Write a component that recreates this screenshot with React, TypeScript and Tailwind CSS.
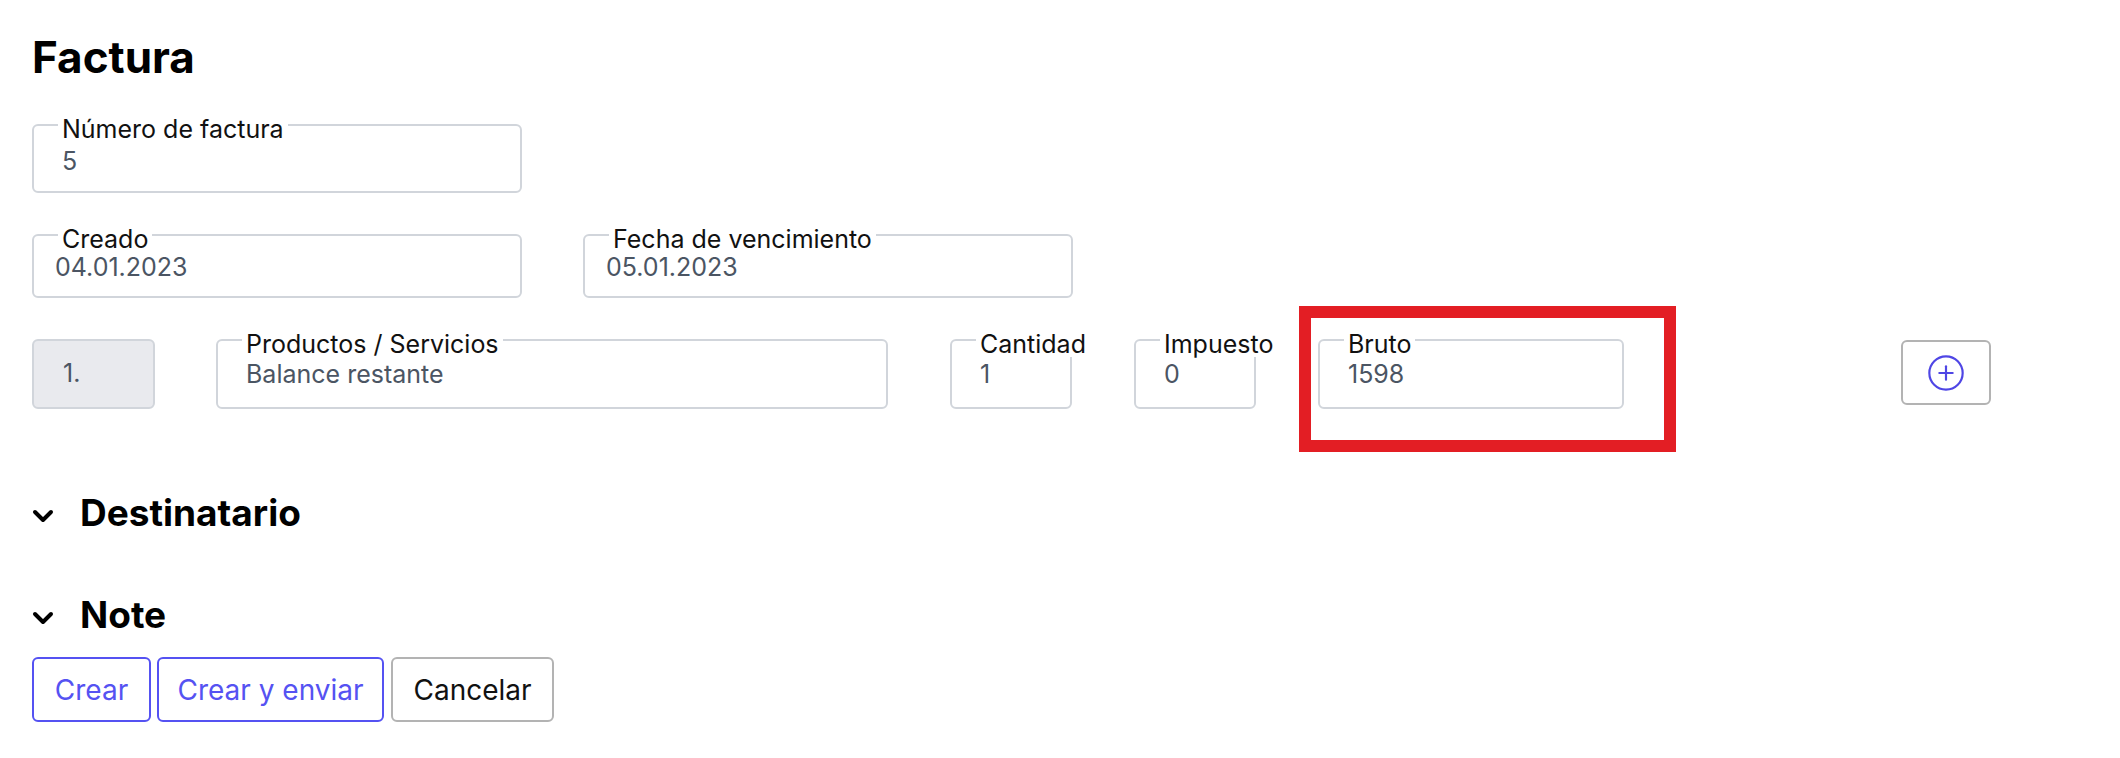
import React from 'react';
import { ChevronDown, CirclePlus } from 'lucide-react';

type FieldProps = {
  label: string;
  value: string;
  width: string;
  valueClass?: string;
  padClass?: string;
};

const Field = ({ label, value, width, valueClass = 'mt-[4px] pl-1', padClass = 'pb-[15px]' }: FieldProps) => (
  <fieldset className={`${width} ${padClass} min-w-0 border-2 border-[#d1d5db] rounded-md px-6 m-0`}>
    <legend className="px-1 pt-[9px] text-[25px] leading-none text-[#111] whitespace-nowrap">{label}</legend>
    <div className={`${valueClass} text-[25px] leading-[30px] text-[#4b5563] whitespace-nowrap`}>{value}</div>
  </fieldset>
);

const Section = ({ title, className }: { title: string; className: string }) => (
  <div className={`flex items-center ${className}`}>
    <ChevronDown className="w-[32px] h-[32px] mt-[7px] -ml-[5px] text-black" strokeWidth={3} />
    <h2 className="ml-[21px] text-[37px] leading-none font-bold text-black">{title}</h2>
  </div>
);

const App = () => {
  return (
    <div className="w-[2120px] h-[758px] bg-white pl-[32px] pt-[35px] font-['Inter',sans-serif]">
      <h1 className="text-[44px] leading-none font-bold text-black">Factura</h1>

      <div className="mt-[29px]">
        <Field label="Número de factura" value="5" width="w-[490px]" />
      </div>

      <div className="mt-[25px] flex gap-[61px]">
        <Field label="Creado" value="04.01.2023" width="w-[490px]" valueClass="-ml-[3px]" padClass="pb-[14px]" />
        <Field label="Fecha de vencimiento" value="05.01.2023" width="w-[490px]" valueClass="-ml-[3px]" padClass="pb-[14px]" />
      </div>

      <div className="mt-[25px] flex items-end">
        <div className="w-[123px] h-[70px] bg-[#e9eaee] border-2 border-[#d1d5db] rounded-md flex items-center pl-[29px] text-[25px] text-[#4b5563]">
          1.
        </div>
        <div className="ml-[61px]">
          <Field label="Productos / Servicios" value="Balance restante" width="w-[672px]" valueClass="mt-[2px] pl-1" padClass="pb-[18px]" />
        </div>
        <div className="ml-[62px]">
          <Field label="Cantidad" value="1" width="w-[122px]" valueClass="mt-[2px] pl-1" padClass="pb-[18px]" />
        </div>
        <div className="ml-[62px]">
          <Field label="Impuesto" value="0" width="w-[122px]" valueClass="mt-[2px] pl-1" padClass="pb-[18px]" />
        </div>
        <div className="ml-[62px] relative">
          <Field label="Bruto" value="1598" width="w-[306px]" valueClass="mt-[2px] pl-1" padClass="pb-[18px]" />
          <div className="absolute left-[-19px] top-[-17px] w-[377px] h-[146px] border-[12px] border-[#e31e24] pointer-events-none" />
        </div>
        <button className="ml-[277px] mb-[4px] w-[90px] h-[65px] border-2 border-[#b3b3b3] rounded-md flex items-center justify-center bg-white">
          <CirclePlus className="w-[40px] h-[40px] text-[#4f46e5]" strokeWidth={1.3} />
        </button>
      </div>

      <Section title="Destinatario" className="mt-[84px]" />
      <Section title="Note" className="mt-[63px]" />

      <div className="mt-[23px] flex gap-[6px]">
        <button className="w-[119px] h-[65px] border-2 border-[#5552f2] rounded-md text-[28px] text-[#5552f2] bg-white">Crear</button>
        <button className="w-[227px] h-[65px] border-2 border-[#5552f2] rounded-md text-[28px] text-[#5552f2] bg-white">Crear y enviar</button>
        <button className="ml-[1px] w-[163px] h-[65px] border-2 border-[#b3b3b3] rounded-md text-[28px] text-[#111] bg-white">Cancelar</button>
      </div>
    </div>
  );
};

export default App;
